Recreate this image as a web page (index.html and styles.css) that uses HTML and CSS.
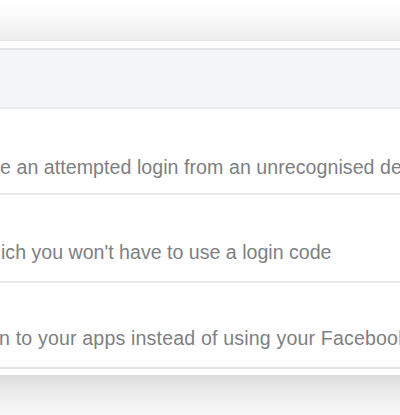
FILE: index.html
```html
<!DOCTYPE html>
<html lang="en">
<head>
<meta charset="utf-8">
<title>Security settings</title>
<link rel="stylesheet" href="styles.css">
</head>
<body>
<div class="page">
  <div class="shade-top"></div>
  <div class="gap"></div>
  <section class="card">
    <div class="card-header"></div>
    <div class="row r1">
      <p class="row-text t1">e an attempted login from an unrecognised device</p>
    </div>
    <div class="row r2">
      <p class="row-text t2">ich you won't have to use a login code</p>
    </div>
    <div class="row r3">
      <p class="row-text t3">n to your apps instead of using your Facebook password</p>
    </div>
  </section>
  <div class="gap-bottom"></div>
  <div class="shade-bottom"></div>
</div>
</body>
</html>
```
FILE: styles.css
```css
html, body {
  margin: 0;
  padding: 0;
  background: #ffffff;
}

.page {
  width: 400px;
  height: 415px;
  overflow: hidden;
  display: flex;
  flex-direction: column;
  font-family: "Liberation Sans", Arial, sans-serif;
}

.shade-top {
  height: 40px;
  background: linear-gradient(#ffffff 0%, #f9f9f9 45%, #ededed 100%);
  border-bottom: 1px solid #e4e4e4;
  flex: none;
}

.gap {
  height: 7px;
  flex: none;
}

.card {
  flex: none;
  border-top: 2px solid #e3e4e7;
  border-bottom: 2px solid #e2e3e5;
  background: #ffffff;
}

.card-header {
  height: 57px;
  background: #f4f5f7;
  border-bottom: 2px solid #ebecee;
}

.row {
  border-bottom: 2px solid #e8e8e8;
  overflow: hidden;
  box-sizing: border-box;
  padding-top: 45px;
}

.r1 { height: 86px; padding-top: 46px; }
.r2 { height: 88px; }
.r3 { height: 84px; border-bottom: none; padding-top: 43px; }

.row-text {
  margin: 0;
  font-size: 19.6px;
  line-height: 24px;
  color: #7d7f83;
  white-space: nowrap;
}

.t1 { margin-left: 0; letter-spacing: 0.05px; }
.t2 { margin-left: 1px; }
.t3 { margin-left: -1px; letter-spacing: 0.16px; }

.gap-bottom {
  height: 6px;
  flex: none;
}

.shade-bottom {
  flex: 1;
  background: linear-gradient(#dcdcdc 0%, #ebebeb 40%, #f8f8f8 100%);
}
```
